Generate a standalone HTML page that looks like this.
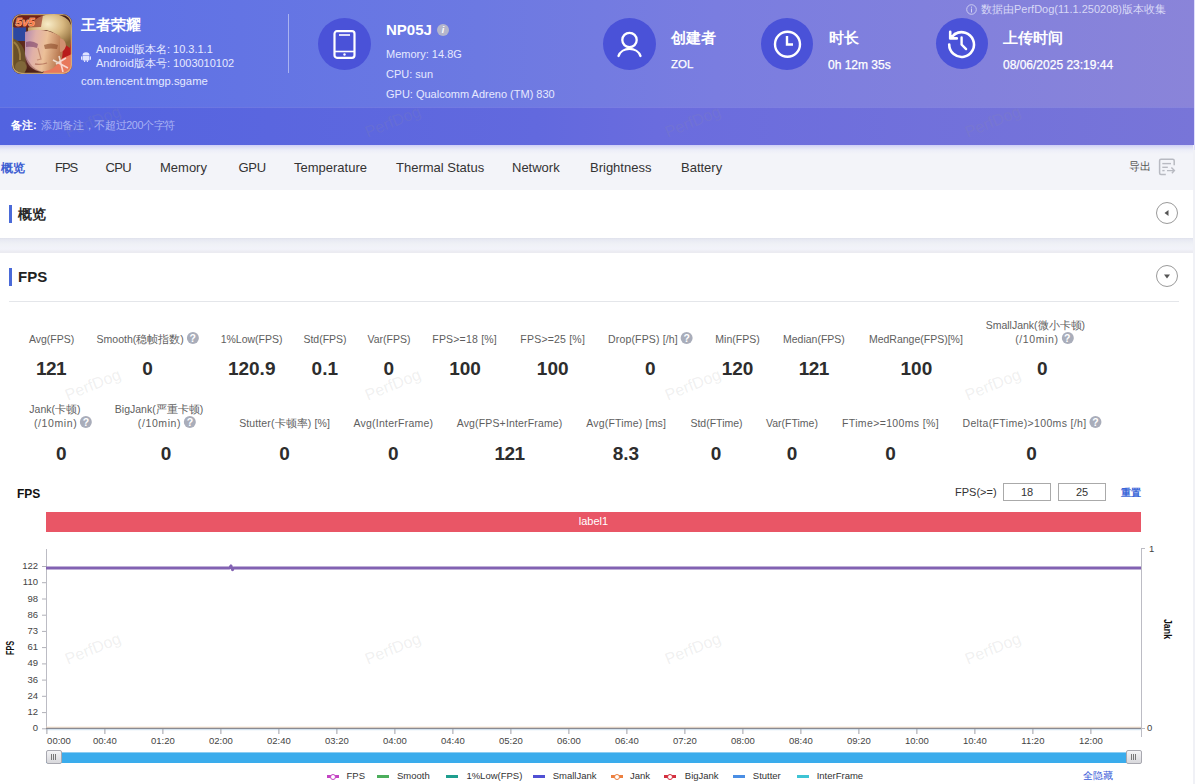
<!DOCTYPE html>
<html><head><meta charset="utf-8">
<style>
*{box-sizing:border-box;margin:0;padding:0}
html,body{width:1195px;height:784px;overflow:hidden;background:#f0f1f6;font-family:"Liberation Sans",sans-serif;color:#333}
.a{position:absolute;white-space:nowrap}
#hdr{position:absolute;left:0;top:0;width:1194px;height:107px;background:linear-gradient(90deg,#5a6fe6 0%,#6c79e2 40%,#7a7de0 60%,#8a84d9 100%)}
#rmk{position:absolute;left:0;top:107px;width:1194px;height:38px;background:linear-gradient(90deg,#5263e0 0%,#6269de 45%,#6a6cde 55%,#7875d8 100%);border-top:1px solid rgba(255,255,255,0.12)}
#tabs{position:absolute;left:0;top:145px;width:1193px;height:45px;background:linear-gradient(180deg,#cdcef6 0px,#dcddf5 2px,#eceef8 5px,#f3f4f9 9px,#f3f4f9 100%)}
.card{position:absolute;left:0;width:1193px;background:#fff}
.circ{position:absolute;width:52px;height:52px;border-radius:50%;background:#4a52d8}
.w{color:#fff}
.tabt{top:161px;font-size:13px;line-height:13px;color:#333}
.bar{position:absolute;left:9px;width:3px;background:#4a6ad8}
.ttl{position:absolute;left:18px;font-size:15px;font-weight:700;color:#222}
.cbtn{position:absolute;width:22px;height:22px;border-radius:50%;border:1px solid #9a9a9a}
.lab{position:absolute;font-size:11px;color:#5e5e5e;text-align:center;white-space:nowrap;transform:translateX(-50%)}
.val{position:absolute;font-size:19px;font-weight:700;color:#2d2d2d;transform:translateX(-50%);white-space:nowrap}
.q{display:inline-block;width:12px;height:12px;border-radius:50%;background:#a9adba;color:#fff;font-size:10.5px;font-weight:700;line-height:12px;text-align:center;vertical-align:-1px;margin-left:3px;position:relative;top:-2px}
.yt{position:absolute;font-size:10px;color:#444;text-align:right;width:30px}
.xt{position:absolute;font-size:10px;color:#444;transform:translateX(-50%)}
.wm{position:absolute;font-size:16px;color:rgba(150,150,150,0.15);transform:rotate(-22deg);white-space:nowrap}
.lg{position:absolute;top:769px;font-size:10px;color:#444;white-space:nowrap}
.lgi{position:absolute;top:774px;width:12px;height:3px}
</style></head><body>
<div class="a" style="left:1194px;top:0;width:1px;height:150px;background:#dedefc"></div>
<div id="hdr"></div>
<div id="rmk"></div>
<div id="tabs"></div>
<div class="card" style="top:190px;height:48px"></div>
<div class="a" style="left:0;top:238px;width:1193px;height:15px;background:linear-gradient(180deg,#dfe1ec 0px,#e8eaf3 2px,#eff1f6 6px,#f2f3fa 11px,#ebebf1 14px)"></div>
<div class="card" style="top:253px;height:531px"></div>

<!-- game icon -->
<svg class="a" style="left:12px;top:14px" width="60" height="60" viewBox="0 0 60 60">
<defs>
<clipPath id="gi"><rect x="0" y="0" width="60" height="60" rx="9"/></clipPath>
<linearGradient id="face" x1="0" y1="0" x2="1" y2="0.2"><stop offset="0" stop-color="#b088b0"/><stop offset="0.3" stop-color="#e0b0a8"/><stop offset="0.6" stop-color="#ecc098"/><stop offset="1" stop-color="#b87850"/></linearGradient>
<radialGradient id="hair" cx="0.45" cy="0.3" r="0.7"><stop offset="0" stop-color="#f8ecc8"/><stop offset="0.5" stop-color="#d8b880"/><stop offset="1" stop-color="#8a6838"/></radialGradient>
<radialGradient id="bg" cx="0.5" cy="0.5" r="0.7"><stop offset="0" stop-color="#7a3828"/><stop offset="1" stop-color="#3a1810"/></radialGradient>
</defs>
<g clip-path="url(#gi)">
<rect width="60" height="60" fill="url(#bg)"/>
<rect x="0" y="13" width="14" height="14" fill="#2c48a0"/>
<path d="M0 24 Q12 28 14 44 Q15 56 12 60 L0 60Z" fill="#6a5028"/>
<path d="M2 28 Q9 34 8 46" stroke="#b09050" stroke-width="2" fill="none" opacity="0.7"/>
<circle cx="9" cy="53" r="6" fill="#8a7040" opacity="0.7"/>
<path d="M48 16 Q60 18 60 26 L60 50 L46 52Z" fill="#b81c1c"/>
<path d="M38 50 L60 40 L60 60 L30 60Z" fill="#e8785c"/>
<path d="M16 14 Q24 0 42 0 Q60 2 60 18 L58 34 L52 30 Q46 18 34 16 Q22 16 16 22Z" fill="url(#hair)"/>
<path d="M13 18 Q30 12 48 22 Q52 34 50 44 Q44 56 30 58 Q16 56 13 42Z" fill="url(#face)"/>
<path d="M13 40 Q18 54 30 58 Q20 58 13 50Z" fill="#6a3030" opacity="0.35"/>
<path d="M48 24 Q54 26 54 32 Q52 38 48 38Z" fill="#d09070"/>
<path d="M14 28 Q20 26 26 30 L25 34 Q19 32 14 33Z" fill="#7a4068" opacity="0.6"/>
<path d="M32 31 Q39 28 46 31 L45 35 Q39 34 33 35Z" fill="#8a4a28" opacity="0.6"/>
<path d="M26 34 L29 45 L25 46" stroke="#b07058" stroke-width="1.2" fill="none" opacity="0.6"/>
<path d="M23 50 Q29 51 35 49" stroke="#9a5040" stroke-width="1.3" fill="none" opacity="0.55"/>
<path d="M44 50 L54 44 M47 42 L51 58 M41 46 L56 54" stroke="#fff" stroke-width="1.6" opacity="0.7"/>
<path d="M2 2 L31 1 L29 13 L2 14Z" fill="#8a2014" opacity="0.6"/>
<text x="3.5" y="12" font-family="Liberation Sans" font-weight="700" font-style="italic" font-size="11.5" fill="#ff7a48" stroke="#ffe8c8" stroke-width="0.6" paint-order="stroke">5v5</text>
</g>
<rect x="0.6" y="0.6" width="58.8" height="58.8" rx="9" fill="none" stroke="#d8b880" stroke-width="1.2" opacity="0.8"/>
</svg>
<div class="a w" style="left:81px;top:17px;font-size:15px;font-weight:700;line-height:15px">王者荣耀</div>
<!-- android icon -->
<svg class="a" style="left:81px;top:50.5px" width="10" height="11.5" viewBox="0 0 10 11">
<path d="M1.5 4.2 A3.5 3.2 0 0 1 8.5 4.2Z" fill="#e0e4ff"/>
<rect x="1.5" y="4.8" width="7" height="4.4" rx="0.6" fill="#e0e4ff"/>
<rect x="0" y="5" width="1.1" height="3.5" rx="0.5" fill="#e0e4ff"/>
<rect x="8.9" y="5" width="1.1" height="3.5" rx="0.5" fill="#e0e4ff"/>
<rect x="3" y="9" width="1.2" height="2" fill="#e0e4ff"/>
<rect x="5.8" y="9" width="1.2" height="2" fill="#e0e4ff"/>
</svg>
<div class="a" style="left:96px;top:44px;font-size:11px;line-height:11px;color:#e6e9ff">Android版本名: 10.3.1.1</div>
<div class="a" style="left:96px;top:58px;font-size:11px;line-height:11px;color:#e6e9ff">Android版本号: 1003010102</div>
<div class="a" style="left:81px;top:76px;font-size:11.3px;line-height:11px;color:#e6e9ff">com.tencent.tmgp.sgame</div>
<div class="a" style="left:288px;top:14px;width:1px;height:59px;background:rgba(255,255,255,0.45)"></div>

<!-- device -->
<div class="circ" style="left:318px;top:18px;width:53px;height:52px"></div>
<svg class="a" style="left:333px;top:30px" width="23" height="29" viewBox="0 0 23 29">
<rect x="1.5" y="1.2" width="20" height="26.6" rx="2.5" fill="none" stroke="#fff" stroke-width="2.2"/>
<line x1="6" y1="5" x2="17" y2="5" stroke="#fff" stroke-width="1.6"/>
<line x1="1.5" y1="21.5" x2="21.5" y2="21.5" stroke="#fff" stroke-width="1.6"/>
<circle cx="11.5" cy="24.5" r="1.2" fill="#fff"/>
</svg>
<div class="a w" style="left:386px;top:22px;font-size:15px;font-weight:700;line-height:15px">NP05J</div>
<div class="a" style="left:437px;top:24px;width:12px;height:12px;border-radius:50%;background:#b4b6cc;color:#fff;font-size:9px;font-weight:700;font-style:italic;text-align:center;line-height:12px">i</div>
<div class="a" style="left:386px;top:48.5px;font-size:11px;line-height:11px;color:#e6e9ff">Memory: 14.8G</div>
<div class="a" style="left:386px;top:68.5px;font-size:11px;line-height:11px;color:#e6e9ff">CPU: sun</div>
<div class="a" style="left:386px;top:88.5px;font-size:11px;line-height:11px;color:#e6e9ff">GPU: Qualcomm Adreno (TM) 830</div>

<!-- creator -->
<div class="circ" style="left:603px;top:18px;width:53px;height:52px"></div>
<svg class="a" style="left:616px;top:30px" width="28" height="28" viewBox="0 0 28 28">
<circle cx="13.5" cy="10" r="7.2" fill="none" stroke="#fff" stroke-width="2.3"/>
<path d="M2.5 26 A11.5 10 0 0 1 24.5 26" fill="none" stroke="#fff" stroke-width="2.3" stroke-linecap="round"/>
</svg>
<div class="a w" style="left:671px;top:30px;font-size:15px;font-weight:700;line-height:15px">创建者</div>
<div class="a w" style="left:671px;top:59.2px;font-size:11.5px;line-height:11.5px;-webkit-text-stroke:0.25px #fff">ZOL</div>

<!-- duration -->
<div class="circ" style="left:761px;top:18px;width:52px;height:52px"></div>
<svg class="a" style="left:772px;top:30px" width="30" height="30" viewBox="0 0 30 30">
<circle cx="15.5" cy="14.2" r="12.5" fill="none" stroke="#fff" stroke-width="2.4"/>
<path d="M15 6 V14.5 H21" fill="none" stroke="#fff" stroke-width="2.4"/>
</svg>
<div class="a w" style="left:829px;top:30px;font-size:15px;font-weight:700;line-height:15px">时长</div>
<div class="a w" style="left:828px;top:58.8px;font-size:12px;line-height:12px;-webkit-text-stroke:0.25px #fff">0h 12m 35s</div>

<!-- upload -->
<div class="circ" style="left:936px;top:18px;width:52px;height:51px"></div>
<svg class="a" style="left:946px;top:28px" width="32" height="32" viewBox="0 0 32 32">
<path d="M8.8 6.2 A12.4 12.4 0 1 1 3.2 16.5" fill="none" stroke="#fff" stroke-width="2.6" stroke-linecap="round"/>
<path d="M4.2 3.8 V10.4 H10.8 M4.6 10 L9 6" fill="none" stroke="#fff" stroke-width="2.6" stroke-linecap="round" stroke-linejoin="round"/>
<path d="M15.6 9.4 V16.6 L20.1 21.1" fill="none" stroke="#fff" stroke-width="2.4" stroke-linecap="round"/>
</svg>
<div class="a w" style="left:1003px;top:30px;font-size:15px;font-weight:700;line-height:15px">上传时间</div>
<div class="a w" style="left:1003px;top:58.8px;font-size:12px;line-height:12px;-webkit-text-stroke:0.25px #fff">08/06/2025 23:19:44</div>

<!-- collected -->
<svg class="a" style="left:966px;top:4px" width="11" height="11" viewBox="0 0 11 11">
<circle cx="5.5" cy="5.5" r="4.8" fill="none" stroke="#d4d4f4" stroke-width="0.9"/>
<rect x="5" y="4.5" width="1" height="4" fill="#d4d4f4"/><rect x="5" y="2.6" width="1" height="1.1" fill="#d4d4f4"/>
</svg>
<div class="a" style="left:981px;top:4px;font-size:11px;line-height:11px;color:#d8d8f6">数据由PerfDog(11.1.250208)版本收集</div>


<!-- tabs -->
<div class="a" style="left:1px;top:161.5px;font-size:12px;font-weight:700;line-height:12px;color:#3f5fd2">概览</div>
<div class="a tabt" style="left:55px;letter-spacing:-1px">FPS</div>
<div class="a tabt" style="left:105.5px;letter-spacing:-0.6px">CPU</div>
<div class="a tabt" style="left:160px">Memory</div>
<div class="a tabt" style="left:238.5px;letter-spacing:-0.3px">GPU</div>
<div class="a tabt" style="left:294px">Temperature</div>
<div class="a tabt" style="left:396px">Thermal Status</div>
<div class="a tabt" style="left:512px">Network</div>
<div class="a tabt" style="left:590px">Brightness</div>
<div class="a tabt" style="left:681px">Battery</div>
<div class="a" style="left:1129px;top:161px;font-size:11px;line-height:11px;color:#555">导出</div>
<svg class="a" style="left:1155px;top:155px" width="25" height="25" viewBox="0 0 25 25">
<path d="M19.2 10.2 V5.8 Q19.2 4.3 17.7 4.3 H6 Q4.6 4.3 4.6 5.8 V17.9 Q4.6 19.4 6 19.4 H10.8" fill="none" stroke="#b8bac2" stroke-width="1.5"/>
<line x1="7.3" y1="8.6" x2="16" y2="8.6" stroke="#b8bac2" stroke-width="1.4"/>
<line x1="7.3" y1="12.3" x2="12.8" y2="12.3" stroke="#b8bac2" stroke-width="1.4"/>
<line x1="7.3" y1="15.6" x2="9.6" y2="15.6" stroke="#b8bac2" stroke-width="1.4"/>
<path d="M12 15.6 H19.3 M16.4 12.5 L19.4 15.6 L16.9 18.2" fill="none" stroke="#b8bac2" stroke-width="1.4"/>
</svg>

<!-- card headers -->
<div class="bar" style="top:205px;height:18px"></div>
<div class="a" style="left:18px;top:207px;font-size:14px;font-weight:700;line-height:15px;color:#2a2a2a">概览</div>
<div class="cbtn" style="left:1156px;top:202px"></div>
<svg class="a" style="left:1163px;top:209px" width="8" height="8" viewBox="0 0 8 8"><path d="M5.5 1 L1.5 4 L5.5 7Z" fill="#555"/></svg>

<div class="bar" style="top:268px;height:18px"></div>
<div class="a" style="left:18px;top:269px;font-size:15px;font-weight:700;line-height:15px;color:#222">FPS</div>
<div class="cbtn" style="left:1156px;top:265px"></div>
<svg class="a" style="left:1163px;top:272px" width="8" height="8" viewBox="0 0 8 8"><path d="M1 2.5 L7 2.5 L4 6.5Z" fill="#555"/></svg>
<div class="a" style="left:9px;top:301px;width:1170px;height:1px;background:#e4e6ea"></div>

<!-- stats -->
<div class="lab" style="left:51.6px;top:333.6px;font-size:10.5px;line-height:10.5px">Avg(FPS)</div>
<div class="lab" style="left:147.7px;top:333.6px;font-size:10.5px;line-height:10.5px">Smooth(稳帧指数)<span class="q">?</span></div>
<div class="lab" style="left:251.6px;top:333.6px;font-size:10.5px;line-height:10.5px">1%Low(FPS)</div>
<div class="lab" style="left:325px;top:333.6px;font-size:10.5px;line-height:10.5px">Std(FPS)</div>
<div class="lab" style="left:389px;top:333.6px;font-size:10.5px;line-height:10.5px">Var(FPS)</div>
<div class="lab" style="left:464.6px;top:333.6px;font-size:10.5px;line-height:10.5px;letter-spacing:0.2px">FPS&gt;=18 [%]</div>
<div class="lab" style="left:552.7px;top:333.6px;font-size:10.5px;line-height:10.5px;letter-spacing:0.2px">FPS&gt;=25 [%]</div>
<div class="lab" style="left:650.5px;top:333.6px;font-size:10.5px;line-height:10.5px;letter-spacing:0.15px">Drop(FPS) [/h]<span class="q">?</span></div>
<div class="lab" style="left:737.5px;top:333.6px;font-size:10.5px;line-height:10.5px">Min(FPS)</div>
<div class="lab" style="left:813.9px;top:333.6px;font-size:10.5px;line-height:10.5px">Median(FPS)</div>
<div class="lab" style="left:915.9px;top:333.6px;font-size:10.5px;line-height:10.5px">MedRange(FPS)[%]</div>
<div class="lab" style="left:1035.4px;top:319.6px;font-size:10.5px;line-height:10.5px">SmallJank(微小卡顿)</div>
<div class="lab" style="left:1044.4px;top:333.6px;font-size:10.5px;line-height:10.5px;letter-spacing:0.6px">(/10min)<span class="q">?</span></div>
<div class="val" style="left:51px;top:358.7px;font-size:19px;line-height:19px;letter-spacing:-0.6px">121</div>
<div class="val" style="left:147.5px;top:358.7px;font-size:19px;line-height:19px">0</div>
<div class="val" style="left:251.7px;top:358.7px;font-size:19px;line-height:19px">120.9</div>
<div class="val" style="left:324.8px;top:358.7px;font-size:19px;line-height:19px">0.1</div>
<div class="val" style="left:388.9px;top:358.7px;font-size:19px;line-height:19px">0</div>
<div class="val" style="left:465px;top:358.7px;font-size:19px;line-height:19px">100</div>
<div class="val" style="left:552.7px;top:358.7px;font-size:19px;line-height:19px">100</div>
<div class="val" style="left:650.4px;top:358.7px;font-size:19px;line-height:19px">0</div>
<div class="val" style="left:737.5px;top:358.7px;font-size:19px;line-height:19px">120</div>
<div class="val" style="left:813.7px;top:358.7px;font-size:19px;line-height:19px;letter-spacing:-0.6px">121</div>
<div class="val" style="left:916.4px;top:358.7px;font-size:19px;line-height:19px">100</div>
<div class="val" style="left:1042.2px;top:358.7px;font-size:19px;line-height:19px">0</div>
<div class="lab" style="left:54.9px;top:403.5px;font-size:10.5px;line-height:10.5px">Jank(卡顿)</div>
<div class="lab" style="left:63.1px;top:417.7px;font-size:10.5px;line-height:10.5px;letter-spacing:0.6px">(/10min)<span class="q">?</span></div>
<div class="lab" style="left:159px;top:403.5px;font-size:10.5px;line-height:10.5px">BigJank(严重卡顿)</div>
<div class="lab" style="left:167px;top:417.7px;font-size:10.5px;line-height:10.5px;letter-spacing:0.6px">(/10min)<span class="q">?</span></div>
<div class="lab" style="left:284.6px;top:417.7px;font-size:10.5px;line-height:10.5px;letter-spacing:0.12px">Stutter(卡顿率) [%]</div>
<div class="lab" style="left:393.4px;top:417.7px;font-size:10.5px;line-height:10.5px;letter-spacing:0.24px">Avg(InterFrame)</div>
<div class="lab" style="left:509.6px;top:417.7px;font-size:10.5px;line-height:10.5px;letter-spacing:0.16px">Avg(FPS+InterFrame)</div>
<div class="lab" style="left:626.2px;top:417.7px;font-size:10.5px;line-height:10.5px;letter-spacing:0.2px">Avg(FTime) [ms]</div>
<div class="lab" style="left:716.5px;top:417.7px;font-size:10.5px;line-height:10.5px">Std(FTime)</div>
<div class="lab" style="left:792px;top:417.7px;font-size:10.5px;line-height:10.5px">Var(FTime)</div>
<div class="lab" style="left:890.5px;top:417.7px;font-size:10.5px;line-height:10.5px;letter-spacing:0.36px">FTime&gt;=100ms [%]</div>
<div class="lab" style="left:1032px;top:417.7px;font-size:10.5px;line-height:10.5px;letter-spacing:0.35px">Delta(FTime)&gt;100ms [/h]<span class="q">?</span></div>
<div class="val" style="left:61.4px;top:444.0px;font-size:19px;line-height:19px">0</div>
<div class="val" style="left:166px;top:444.0px;font-size:19px;line-height:19px">0</div>
<div class="val" style="left:284.5px;top:444.0px;font-size:19px;line-height:19px">0</div>
<div class="val" style="left:393.4px;top:444.0px;font-size:19px;line-height:19px">0</div>
<div class="val" style="left:509.5px;top:444.0px;font-size:19px;line-height:19px;letter-spacing:-0.6px">121</div>
<div class="val" style="left:625.9px;top:444.0px;font-size:19px;line-height:19px">8.3</div>
<div class="val" style="left:716px;top:444.0px;font-size:19px;line-height:19px">0</div>
<div class="val" style="left:792px;top:444.0px;font-size:19px;line-height:19px">0</div>
<div class="val" style="left:890.5px;top:444.0px;font-size:19px;line-height:19px">0</div>
<div class="val" style="left:1031.6px;top:444.0px;font-size:19px;line-height:19px">0</div>
<!-- chart -->
<div class="a" style="left:17px;top:488px;font-size:12px;font-weight:700;line-height:12px;color:#111">FPS</div>
<div class="a" style="left:955px;top:487px;font-size:11px;line-height:11px;color:#333">FPS(&gt;=)</div>
<div class="a" style="left:1003px;top:483px;width:48px;height:18px;border:1px solid #aaa;font-size:11px;line-height:16px;text-align:center;color:#333">18</div>
<div class="a" style="left:1058px;top:483px;width:48px;height:18px;border:1px solid #aaa;font-size:11px;line-height:16px;text-align:center;color:#333">25</div>
<div class="a" style="left:1121px;top:487px;font-size:10px;font-weight:700;line-height:11px;color:#3a66d8">重置</div>
<div class="a" style="left:46px;top:511.5px;width:1095px;height:20px;background:#e95666;color:#fff;font-size:11px;line-height:18px;text-align:center">label1</div>
<svg class="a" style="left:0;top:540px" width="1195" height="200" viewBox="0 540 1195 200">
<line x1="46.5" y1="549" x2="46.5" y2="729" stroke="#bcbcc4" stroke-width="1"/>
<line x1="1141.5" y1="548" x2="1141.5" y2="737" stroke="#bcbcc4" stroke-width="1"/>
<line x1="1141" y1="548.5" x2="1145" y2="548.5" stroke="#bcbcc4" stroke-width="1"/>
<line x1="1141" y1="728.5" x2="1145" y2="728.5" stroke="#bcbcc4" stroke-width="1"/>
<line x1="42" y1="728.8" x2="46" y2="728.8" stroke="#b0b0b8" stroke-width="1"/>
<line x1="42" y1="712.6" x2="46" y2="712.6" stroke="#b0b0b8" stroke-width="1"/>
<line x1="42" y1="696.3" x2="46" y2="696.3" stroke="#b0b0b8" stroke-width="1"/>
<line x1="42" y1="680.1" x2="46" y2="680.1" stroke="#b0b0b8" stroke-width="1"/>
<line x1="42" y1="663.9" x2="46" y2="663.9" stroke="#b0b0b8" stroke-width="1"/>
<line x1="42" y1="647.6" x2="46" y2="647.6" stroke="#b0b0b8" stroke-width="1"/>
<line x1="42" y1="631.4" x2="46" y2="631.4" stroke="#b0b0b8" stroke-width="1"/>
<line x1="42" y1="615.2" x2="46" y2="615.2" stroke="#b0b0b8" stroke-width="1"/>
<line x1="42" y1="599.0" x2="46" y2="599.0" stroke="#b0b0b8" stroke-width="1"/>
<line x1="42" y1="582.7" x2="46" y2="582.7" stroke="#b0b0b8" stroke-width="1"/>
<line x1="42" y1="566.5" x2="46" y2="566.5" stroke="#b0b0b8" stroke-width="1"/>
<line x1="46" y1="727.2" x2="1141" y2="727.2" stroke="#f6dcc2" stroke-width="1"/>
<line x1="46" y1="728.4" x2="1141" y2="728.4" stroke="#8a8a92" stroke-width="1.2"/>
<line x1="46" y1="729.7" x2="1141" y2="729.7" stroke="#c8dcec" stroke-width="1"/>
<line x1="46.9" y1="729" x2="46.9" y2="734" stroke="#a0a0a8" stroke-width="1"/>
<line x1="104.9" y1="729" x2="104.9" y2="734" stroke="#a0a0a8" stroke-width="1"/>
<line x1="162.9" y1="729" x2="162.9" y2="734" stroke="#a0a0a8" stroke-width="1"/>
<line x1="220.9" y1="729" x2="220.9" y2="734" stroke="#a0a0a8" stroke-width="1"/>
<line x1="278.9" y1="729" x2="278.9" y2="734" stroke="#a0a0a8" stroke-width="1"/>
<line x1="336.9" y1="729" x2="336.9" y2="734" stroke="#a0a0a8" stroke-width="1"/>
<line x1="394.9" y1="729" x2="394.9" y2="734" stroke="#a0a0a8" stroke-width="1"/>
<line x1="452.9" y1="729" x2="452.9" y2="734" stroke="#a0a0a8" stroke-width="1"/>
<line x1="510.9" y1="729" x2="510.9" y2="734" stroke="#a0a0a8" stroke-width="1"/>
<line x1="568.9" y1="729" x2="568.9" y2="734" stroke="#a0a0a8" stroke-width="1"/>
<line x1="626.9" y1="729" x2="626.9" y2="734" stroke="#a0a0a8" stroke-width="1"/>
<line x1="684.9" y1="729" x2="684.9" y2="734" stroke="#a0a0a8" stroke-width="1"/>
<line x1="742.9" y1="729" x2="742.9" y2="734" stroke="#a0a0a8" stroke-width="1"/>
<line x1="800.9" y1="729" x2="800.9" y2="734" stroke="#a0a0a8" stroke-width="1"/>
<line x1="858.9" y1="729" x2="858.9" y2="734" stroke="#a0a0a8" stroke-width="1"/>
<line x1="916.9" y1="729" x2="916.9" y2="734" stroke="#a0a0a8" stroke-width="1"/>
<line x1="974.9" y1="729" x2="974.9" y2="734" stroke="#a0a0a8" stroke-width="1"/>
<line x1="1032.9" y1="729" x2="1032.9" y2="734" stroke="#a0a0a8" stroke-width="1"/>
<line x1="1090.9" y1="729" x2="1090.9" y2="734" stroke="#a0a0a8" stroke-width="1"/>
<path d="M46 568 L229.5 568 L231 565.8 L232.5 569.8 L233.5 568 L1141 568" stroke="#8262b2" stroke-width="2.8" fill="none" stroke-linejoin="round"/>
</svg>
<div class="yt" style="left:8px;top:722.3px;font-size:9.5px;line-height:11px">0</div>
<div class="yt" style="left:8px;top:706.1px;font-size:9.5px;line-height:11px">12</div>
<div class="yt" style="left:8px;top:689.8px;font-size:9.5px;line-height:11px">24</div>
<div class="yt" style="left:8px;top:673.6px;font-size:9.5px;line-height:11px">36</div>
<div class="yt" style="left:8px;top:657.4px;font-size:9.5px;line-height:11px">49</div>
<div class="yt" style="left:8px;top:641.1px;font-size:9.5px;line-height:11px">61</div>
<div class="yt" style="left:8px;top:624.9px;font-size:9.5px;line-height:11px">73</div>
<div class="yt" style="left:8px;top:608.7px;font-size:9.5px;line-height:11px">86</div>
<div class="yt" style="left:8px;top:592.5px;font-size:9.5px;line-height:11px">98</div>
<div class="yt" style="left:8px;top:576.2px;font-size:9.5px;line-height:11px">110</div>
<div class="yt" style="left:8px;top:560.0px;font-size:9.5px;line-height:11px">122</div>
<div class="a" style="left:1149px;top:543px;font-size:9.5px;line-height:11px;color:#444">1</div>
<div class="a" style="left:1147px;top:722px;font-size:9.5px;line-height:11px;color:#444">0</div>
<div class="a" style="left:-1.3px;top:642.7px;width:24px;font-size:10px;font-weight:700;line-height:10px;color:#111;transform:rotate(-90deg) scaleX(0.72);text-align:center">FPS</div>
<div class="a" style="left:1153.5px;top:623.8px;width:26px;font-size:10px;font-weight:700;line-height:10px;color:#111;transform:rotate(90deg) scaleX(0.88);text-align:center">Jank</div>
<div class="xt" style="left:59.0px;top:735.5px;font-size:9.5px;line-height:10px">00:00</div>
<div class="xt" style="left:104.9px;top:735.5px;font-size:9.5px;line-height:10px">00:40</div>
<div class="xt" style="left:162.9px;top:735.5px;font-size:9.5px;line-height:10px">01:20</div>
<div class="xt" style="left:220.9px;top:735.5px;font-size:9.5px;line-height:10px">02:00</div>
<div class="xt" style="left:278.9px;top:735.5px;font-size:9.5px;line-height:10px">02:40</div>
<div class="xt" style="left:336.9px;top:735.5px;font-size:9.5px;line-height:10px">03:20</div>
<div class="xt" style="left:394.9px;top:735.5px;font-size:9.5px;line-height:10px">04:00</div>
<div class="xt" style="left:452.9px;top:735.5px;font-size:9.5px;line-height:10px">04:40</div>
<div class="xt" style="left:510.9px;top:735.5px;font-size:9.5px;line-height:10px">05:20</div>
<div class="xt" style="left:568.9px;top:735.5px;font-size:9.5px;line-height:10px">06:00</div>
<div class="xt" style="left:626.9px;top:735.5px;font-size:9.5px;line-height:10px">06:40</div>
<div class="xt" style="left:684.9px;top:735.5px;font-size:9.5px;line-height:10px">07:20</div>
<div class="xt" style="left:742.9px;top:735.5px;font-size:9.5px;line-height:10px">08:00</div>
<div class="xt" style="left:800.9px;top:735.5px;font-size:9.5px;line-height:10px">08:40</div>
<div class="xt" style="left:858.9px;top:735.5px;font-size:9.5px;line-height:10px">09:20</div>
<div class="xt" style="left:916.9px;top:735.5px;font-size:9.5px;line-height:10px">10:00</div>
<div class="xt" style="left:974.9px;top:735.5px;font-size:9.5px;line-height:10px">10:40</div>
<div class="xt" style="left:1032.9px;top:735.5px;font-size:9.5px;line-height:10px">11:20</div>
<div class="xt" style="left:1090.9px;top:735.5px;font-size:9.5px;line-height:10px">12:00</div>
<div class="a" style="left:46px;top:752px;width:1095px;height:11px;background:#3aacec;border-top:1px solid #8ccdf2"></div>
<div class="a" style="left:46px;top:750px;width:16px;height:14px;border:1px solid #a8a8b0;border-radius:2px;background:linear-gradient(#f4f4f6,#d8d8dc)"></div>
<div class="a" style="left:51px;top:754px;width:1px;height:6px;background:#777;box-shadow:2px 0 0 #777,4px 0 0 #777"></div>
<div class="a" style="left:1126px;top:750px;width:16px;height:14px;border:1px solid #a8a8b0;border-radius:2px;background:linear-gradient(#f4f4f6,#d8d8dc)"></div>
<div class="a" style="left:1131px;top:754px;width:1px;height:6px;background:#777;box-shadow:2px 0 0 #777,4px 0 0 #777"></div>
<div class="a" style="left:327px;top:775px;width:12px;height:3px;background:#c444c4"></div>
<div class="a" style="left:330px;top:773.5px;width:6px;height:6px;border-radius:50%;background:#fff;border:1.5px solid #c444c4"></div>
<div class="a" style="left:346.5px;top:771px;font-size:9.5px;line-height:10px;color:#333">FPS</div>
<div class="a" style="left:377px;top:775px;width:12px;height:3px;background:#4cae5c"></div>
<div class="a" style="left:397px;top:771px;font-size:9.5px;line-height:10px;color:#333">Smooth</div>
<div class="a" style="left:446px;top:775px;width:12px;height:3px;background:#1f9e8e"></div>
<div class="a" style="left:466.4px;top:771px;font-size:9.5px;line-height:10px;color:#333">1%Low(FPS)</div>
<div class="a" style="left:533px;top:775px;width:12px;height:3px;background:#5050d4"></div>
<div class="a" style="left:552.7px;top:771px;font-size:9.5px;line-height:10px;color:#333">SmallJank</div>
<div class="a" style="left:610.5px;top:775px;width:12px;height:3px;background:#ec8040"></div>
<div class="a" style="left:613.5px;top:773.5px;width:6px;height:6px;border-radius:50%;background:#fff;border:1.5px solid #ec8040"></div>
<div class="a" style="left:630px;top:771px;font-size:9.5px;line-height:10px;color:#333">Jank</div>
<div class="a" style="left:664.4px;top:775px;width:12px;height:3px;background:#d43040"></div>
<div class="a" style="left:667.4px;top:773.5px;width:6px;height:6px;border-radius:50%;background:#fff;border:1.5px solid #d43040"></div>
<div class="a" style="left:684.8px;top:771px;font-size:9.5px;line-height:10px;color:#333">BigJank</div>
<div class="a" style="left:733px;top:775px;width:12px;height:3px;background:#4a8ee4"></div>
<div class="a" style="left:752.8px;top:771px;font-size:9.5px;line-height:10px;color:#333">Stutter</div>
<div class="a" style="left:797px;top:775px;width:12px;height:3px;background:#3ec4d4"></div>
<div class="a" style="left:816.7px;top:771px;font-size:9.5px;line-height:10px;color:#333">InterFrame</div>
<div class="a" style="left:1083px;top:770px;font-size:10px;line-height:11px;color:#3a5ad8">全隐藏</div>

<!-- remark -->
<div class="a w" style="left:11px;top:120px;font-size:11px;font-weight:700;line-height:11px">备注:</div>
<div class="a" style="left:41px;top:120.3px;font-size:10.7px;line-height:11px;color:#aab3f4;letter-spacing:-0.35px">添加备注，不超过200个字符</div>

<!-- watermarks -->
<div class="wm" style="left:53px;top:113px;width:80px;height:18px;line-height:18px;text-align:center">PerfDog</div>
<div class="wm" style="left:353px;top:113px;width:80px;height:18px;line-height:18px;text-align:center">PerfDog</div>
<div class="wm" style="left:653px;top:113px;width:80px;height:18px;line-height:18px;text-align:center">PerfDog</div>
<div class="wm" style="left:953px;top:113px;width:80px;height:18px;line-height:18px;text-align:center">PerfDog</div>
<div class="wm" style="left:53px;top:376px;width:80px;height:18px;line-height:18px;text-align:center">PerfDog</div>
<div class="wm" style="left:353px;top:376px;width:80px;height:18px;line-height:18px;text-align:center">PerfDog</div>
<div class="wm" style="left:653px;top:376px;width:80px;height:18px;line-height:18px;text-align:center">PerfDog</div>
<div class="wm" style="left:953px;top:376px;width:80px;height:18px;line-height:18px;text-align:center">PerfDog</div>
<div class="wm" style="left:53px;top:640px;width:80px;height:18px;line-height:18px;text-align:center">PerfDog</div>
<div class="wm" style="left:353px;top:640px;width:80px;height:18px;line-height:18px;text-align:center">PerfDog</div>
<div class="wm" style="left:653px;top:640px;width:80px;height:18px;line-height:18px;text-align:center">PerfDog</div>
<div class="wm" style="left:953px;top:640px;width:80px;height:18px;line-height:18px;text-align:center">PerfDog</div>
</body></html>
